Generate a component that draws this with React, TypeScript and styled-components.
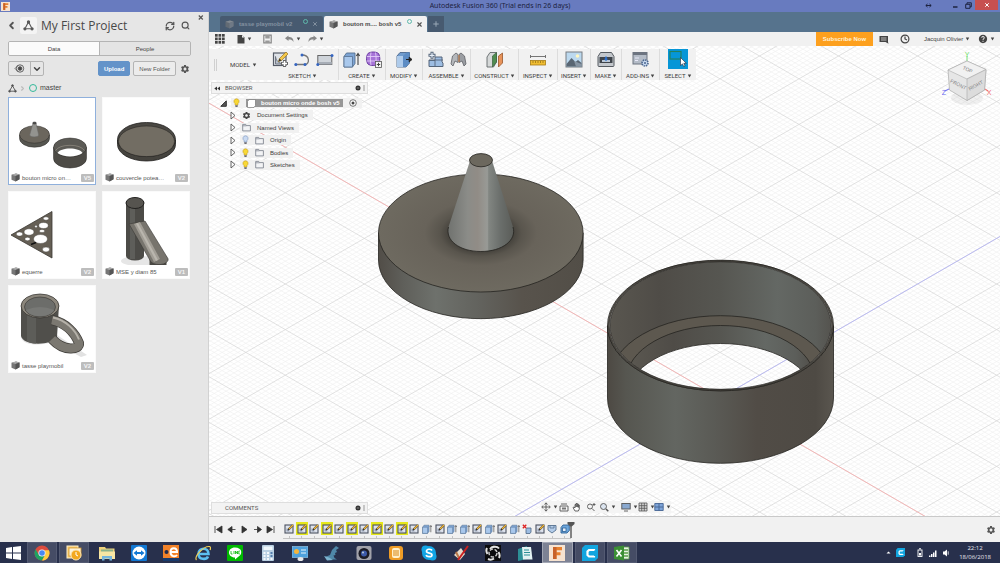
import React from "react";
import styled, { createGlobalStyle } from "styled-components";
import { ChevronDown, ChevronLeft, ChevronRight, RefreshCw, Search, X, Plus } from "lucide-react";
import { MdSettings, MdHelp } from "react-icons/md";

const Global = createGlobalStyle`
  *, *::before, *::after { box-sizing: border-box; }
  html, body { margin: 0; padding: 0; }
  body { font-family: "Liberation Sans", Arial, sans-serif; font-size: 6px; line-height: 8px; color: #444; }
  button { font: inherit; color: inherit; background: none; border: 0; padding: 0; margin: 0; cursor: pointer; }
  svg { display: block; flex: none; }
`;

const Page = styled.div`
  min-height: 100vh;
  display: flex;
  flex-direction: column;
`;

/* ---------- window title bar ---------- */
const TitleBar = styled.header`
  height: 12px;
  background: #687bbf;
  display: grid;
  grid-template-columns: 1fr auto 1fr;
  align-items: center;
`;
const TitleLeft = styled.div`
  padding-left: 1px;
`;
const TitleText = styled.h1`
  margin: 0;
  font: 400 7px/12px "Noto Sans", sans-serif;
  color: #1d2340;
`;
const WindowButtons = styled.div`
  display: flex;
  justify-content: flex-end;
  align-self: start;
  padding-right: 2px;
`;
const WindowButton = styled.button<{ $w?: number; $close?: boolean }>`
  width: ${(p) => p.$w ?? 14}px;
  height: 10px;
  display: flex;
  align-items: center;
  justify-content: center;
  background: ${(p) => (p.$close ? "#c75050" : "transparent")};
`;

const Main = styled.div`
  flex: 1;
  display: flex;
`;

/* ---------- data panel ---------- */
const Panel = styled.aside`
  width: 209px;
  flex: none;
  background: #e6e6e6;
  border-right: 1px solid #d2d2d2;
  display: flex;
  flex-direction: column;
`;
const PanelHeader = styled.div`
  display: flex;
  height: 27px;
  padding: 0 4px 0 7px;
  align-items: center;
`;
const IconButton = styled.button<{ $w?: number }>`
  width: ${(p) => p.$w ?? 8}px;
  height: 10px;
  display: flex;
  align-items: center;
  justify-content: center;
  flex: none;
  color: #555;
`;
const ProjectBadge = styled.span`
  width: 17px;
  height: 17px;
  margin: 0 4px 0 5px;
  background: #f4f4f4;
  border-radius: 2px;
  display: flex;
  align-items: center;
  justify-content: center;
`;
const ProjectName = styled.h2`
  flex: 1;
  margin: 0;
  font: 400 12px/18px "Open Sans", sans-serif;
  color: #484848;
  white-space: nowrap;
`;
const CloseSlot = styled.div`
  align-self: flex-start;
  margin-left: 4px;
`;
const PanelBody = styled.div`
  padding: 2px 17px 0 8px;
  display: flex;
  flex-direction: column;
`;
const Segmented = styled.div`
  display: flex;
  height: 15px;
  border: 1px solid #b4b4b4;
  border-radius: 2px;
  overflow: hidden;
`;
const Segment = styled.button<{ $on?: boolean }>`
  flex: 1;
  background: ${(p) => (p.$on ? "#fbfbfb" : "#e4e4e4")};
  & + & { border-left: 1px solid #b4b4b4; }
`;
const Actions = styled.div`
  display: flex;
  align-items: center;
  gap: 3px;
  margin-top: 5px;
  height: 15px;
`;
const Split = styled.div`
  display: flex;
  height: 15px;
  border: 1px solid #b4b4b4;
  border-radius: 2px;
  margin-right: auto;
`;
const SplitPart = styled.button<{ $w: number }>`
  width: ${(p) => p.$w}px;
  display: flex;
  align-items: center;
  justify-content: center;
  & + & { border-left: 1px solid #b4b4b4; }
`;
const ActionButton = styled.button<{ $primary?: boolean }>`
  height: 15px;
  padding: 0 5px;
  border-radius: 2px;
  border: 1px solid ${(p) => (p.$primary ? "#6393c9" : "#b4b4b4")};
  background: ${(p) => (p.$primary ? "#6393c9" : "#ececec")};
  color: ${(p) => (p.$primary ? "#fff" : "#555")};
  font-weight: ${(p) => (p.$primary ? 700 : 400)};
`;
const Crumbs = styled.nav`
  display: flex;
  align-items: center;
  gap: 2px;
  height: 12px;
  margin: 6px 0 3px;
  font-size: 7px;
  color: #444;
`;
const CrumbRing = styled.span`
  width: 8px;
  height: 8px;
  border: 1px solid #35b99a;
  border-radius: 50%;
  margin: 0 1px;
`;
const Cards = styled.div`
  display: grid;
  grid-template-columns: 88px 88px;
  grid-auto-rows: 88px;
  gap: 6px;
`;
const CardBox = styled.article<{ $on?: boolean }>`
  background: #fff;
  border: 1px solid ${(p) => (p.$on ? "#8fb0dc" : "#fafafa")};
  display: flex;
  flex-direction: column;
`;
const CardThumb = styled.div`
  flex: 1;
  min-height: 0;
  overflow: hidden;
`;
const CardFoot = styled.div`
  height: 13px;
  padding: 0 1px 0 2px;
  display: flex;
  align-items: center;
  gap: 2px;
  color: #555;
  white-space: nowrap;
`;
const CardName = styled.span`
  flex: 1;
`;
const Version = styled.span`
  width: 13px;
  height: 8px;
  background: #bdbdbd;
  color: #f4f4f4;
  font-weight: 700;
  text-align: center;
  border-radius: 1px;
`;

/* ---------- work area ---------- */
const Work = styled.main`
  flex: 1;
  min-width: 0;
  display: flex;
  flex-direction: column;
`;
const Tabs = styled.div`
  height: 20px;
  background: #56738d;
  display: flex;
  align-items: flex-end;
  padding: 4px 0 0 11px;
  gap: 1px;
`;
const Tab = styled.div<{ $on?: boolean }>`
  height: 16px;
  width: 103px;
  display: flex;
  align-items: center;
  padding: 0 4px 0 5px;
  background: ${(p) => (p.$on ? "#f1f1f1" : "#475a70")};
  color: ${(p) => (p.$on ? "#4a4a4a" : "#8391a0")};
  font-weight: 700;
  border-radius: 2px 2px 0 0;
`;
const TabName = styled.button`
  flex: 1;
  display: flex;
  align-items: center;
  gap: 5px;
  white-space: nowrap;
`;
const TabRing = styled.span`
  width: 5px;
  height: 5px;
  border: 1px solid #5fb9ac;
  border-radius: 50%;
  margin: 0 3px 6px 0;
`;
const NewTab = styled.button`
  width: 16px;
  height: 16px;
  background: #475a70;
  color: #9aa8b6;
  display: flex;
  align-items: center;
  justify-content: center;
`;
const MenuBar = styled.div`
  height: 14px;
  background: #f1f1f1;
  display: flex;
  align-items: center;
  padding: 0 7px 0 6px;
  color: #444;
`;
const QuickTools = styled.div`
  display: flex;
  align-items: center;
  margin-right: auto;
`;
const Tool = styled.button<{ $w: number }>`
  width: ${(p) => p.$w}px;
  height: 12px;
  display: flex;
  align-items: center;
  justify-content: flex-start;
  gap: 2px;
  white-space: nowrap;
`;
const Subscribe = styled.button`
  height: 14px;
  width: 57px;
  background: #fda01e;
  color: #fff1d8;
  font-weight: 700;
  margin-right: 6px;
`;
const Viewport = styled.section`
  position: relative;
  flex: 1;
  display: flex;
  flex-direction: column;
  align-items: flex-start;
  min-height: 470px;
  padding-top: 3px;
  background: #fff;
  overflow: hidden;
`;
const Scene = styled.svg`
  position: absolute;
  inset: 0;
  width: 100%;
  height: 100%;
`;
const Ribbon = styled.div`
  position: relative;
  display: flex;
  height: 31px;
  background: #f1f1f1;
`;
const Group = styled.div<{ $w: number }>`
  width: ${(p) => p.$w}px;
  display: flex;
  flex-direction: column;
  justify-content: space-between;
  align-items: center;
  & + & { border-left: 1px solid #dcdcdc; }
`;
const GroupIcons = styled.div<{ $gap?: number }>`
  display: flex;
  gap: ${(p) => p.$gap ?? 6}px;
  height: 20px;
  align-items: center;
`;
const GroupLabel = styled.button`
  display: flex;
  align-items: center;
  gap: 1px;
  font: 400 6px/8px Roboto, sans-serif;
  color: #3c3c3c;
  white-space: nowrap;
`;
const Workspace = styled.div`
  width: 58px;
  display: flex;
  align-items: center;
  gap: 13px;
  padding-left: 5px;
`;
const Grip = styled.span`
  width: 3px;
  height: 12px;
  border: solid #d0d0d0;
  border-width: 0 1px;
`;
const Dock = styled.div`
  position: relative;
  width: 157px;
  height: 12px;
  margin: 2px 0 0 2px;
  padding: 0 2px;
  display: flex;
  align-items: center;
  background: #f3f3f3;
  border: 1px solid #dedede;
  font: 400 6px/8px Roboto, sans-serif;
  color: #555;
`;
const DockTitle = styled.span`
  flex: 1;
  padding-left: 5px;
`;
const DockLead = styled.span`
  width: 6px;
`;
const Tree = styled.ul`
  position: relative;
  list-style: none;
  margin: 4px 0 0;
  padding: 0 0 0 11px;
  height: 72px;
  display: flex;
  flex-direction: column;
  justify-content: space-between;
  align-items: flex-start;
  color: #3c3c3c;
`;
const Row = styled.li<{ $depth: number }>`
  height: 10px;
  display: flex;
  align-items: center;
  gap: 4px;
  padding-left: ${(p) => p.$depth * 10}px;
`;
const RowBody = styled.span`
  height: 10px;
  display: flex;
  align-items: center;
  gap: 6px;
  padding: 0 5px 0 2px;
  background: #f1f1f1;
`;
const RowName = styled.span``;
const Selected = styled.span`
  height: 8px;
  display: flex;
  align-items: center;
  gap: 5px;
  padding-right: 3px;
  background: #979797;
  color: #fff;
  font-weight: 700;
`;
const CubeSlot = styled.div`
  position: absolute;
  top: 0;
  right: 4px;
`;
const BottomRow = styled.div`
  position: relative;
  margin-top: auto;
  width: 100%;
  display: flex;
  align-items: center;
  padding-bottom: 2px;
`;
const NavBar = styled.div`
  margin-left: 173px;
  height: 12px;
  display: flex;
  align-items: center;
  background: #f4f4f4;
`;
const Timeline = styled.footer`
  height: 26px;
  background: #f1f1f1;
  border-top: 1px solid #c9c9c9;
  display: flex;
  align-items: center;
  padding: 0 4px 0 3px;
`;
const Playback = styled.div`
  width: 71px;
  display: flex;
  justify-content: flex-start;
`;
const Steps = styled.div`
  width: 288px;
  height: 17px;
  margin-top: 2px;
  display: grid;
  grid-template-columns: repeat(23, 1fr);
`;
const Step = styled.button<{ $on?: boolean }>`
  display: flex;
  flex-direction: column;
  align-items: center;
  justify-content: space-between;
  background: linear-gradient(#c4c4c4, #c4c4c4) 0 100% / 100% 1px no-repeat;
  span {
    display: flex;
    align-items: center;
    justify-content: center;
    width: 12px;
    height: 13px;
    background: ${(p) => (p.$on ? "#e6e81c" : "transparent")};
  }
  &::after { content: ""; width: 1px; height: 3px; background: #c4c4c4; }
`;
const MarkerSlot = styled.div`
  margin-left: -4px;
  margin-right: auto;
`;

/* ---------- task bar ---------- */
const Taskbar = styled.footer`
  height: 21px;
  background: #28304c;
  display: flex;
  align-items: center;
`;
const Start = styled.button`
  width: 26px;
  display: flex;
  justify-content: center;
`;
const Apps = styled.div`
  width: 612px;
  display: grid;
  grid-template-columns: repeat(19, 1fr);
`;
const AppButton = styled.button<{ $state?: "open" | "active" }>`
  height: 21px;
  margin: 0 1px;
  display: flex;
  align-items: center;
  justify-content: center;
  background: ${(p) => (p.$state === "active" ? "#7d8294" : p.$state === "open" ? "#454c65" : "transparent")};
  border: 1px solid ${(p) => (p.$state === "active" ? "#a3a7b4" : p.$state === "open" ? "#535a72" : "transparent")};
`;
const Tray = styled.div`
  margin-left: auto;
  display: flex;
  align-items: center;
  gap: 5px;
  padding-right: 9px;
  color: #e8e8ee;
`;
const Clock = styled.time`
  font: 400 6px/9px "Open Sans", sans-serif;
  text-align: center;
  margin-left: 4px;
`;

/* ---------- small glyphs ---------- */
const Caret = () => (
  <svg width="5" height="4" viewBox="0 0 5 4"><path d="M.8.6h3.4L2.5 3.4z" fill="#444" /></svg>
);
const Nodes = ({ s = 10 }: { s?: number }) => (
  <svg width={s} height={s} viewBox="0 0 10 10" fill="none" stroke="#555" strokeWidth="1">
    <path d="M4.6 2.6 2.2 7M5.4 2.6 7.8 7M3 8h4" />
    <circle cx="5" cy="1.8" r="1" fill="#555" /><circle cx="1.8" cy="8" r="1" fill="#555" /><circle cx="8.2" cy="8" r="1" fill="#555" />
  </svg>
);
const Cube = ({ s = 9, dim = false }: { s?: number; dim?: boolean }) => (
  <svg width={s} height={s} viewBox="0 0 9 9" opacity={dim ? 0.6 : 1}>
    <path d="M.5 1.8 5 .5l3.5.9v4.8L4.6 8.6.5 6.8z" fill="#777" />
    <path d="M.5 1.8 5 .5l3.5.9-4 1.5z" fill="#aaa" /><path d="M4.5 2.9v5.7L8.5 6.2V1.4z" fill={dim ? "#8a8f96" : "#555"} />
  </svg>
);
const Bulb = ({ off = false }: { off?: boolean }) => (
  <svg width="7" height="10" viewBox="0 0 7 10">
    <path d="M3.5.8a2.6 2.6 0 0 1 1.5 4.7L4.8 7H2.2L2 5.5A2.6 2.6 0 0 1 3.5.8z" fill={off ? "#c9daf2" : "#f8d836"} stroke={off ? "#7b93bd" : "#c39a1c"} strokeWidth=".6" />
    <path d="M2.2 7.2h2.6v1.3l-.7.6H2.9l-.7-.6z" fill="#6e6e78" />
  </svg>
);
const Folder = () => (
  <svg width="9" height="9" viewBox="0 0 9 9"><path d="M.7 7.900V1.400h3l.7 1.200h4v5.300z" fill="#f2f3f5" stroke="#757b86" strokeWidth=".8" /><path d="M.7 2.800h3.700" stroke="#757b86" strokeWidth=".7" /></svg>
);
const Expand = () => (
  <svg width="6" height="9" viewBox="0 0 6 9"><path d="M1 1v7l4-3.500z" fill="#fafafa" stroke="#555" strokeWidth=".9" /></svg>
);
const DockEnd = () => (
  <svg width="10" height="8" viewBox="0 0 10 8"><circle cx="3" cy="4" r="2.500" fill="#333" /><path d="M1.800 4h2.400" stroke="#aaa" strokeWidth=".7" /><path d="M9 1v6" stroke="#999" /></svg>
);

/* ---------- ribbon icons ---------- */
const SketchIcon = () => (
  <svg width="17" height="17" viewBox="0 0 17 17">
    <rect x="1.500" y="2" width="12.500" height="12.500" fill="#dfe3e8" stroke="#555b66" strokeWidth="1.200" />
    <path d="M3.500 13V5.500c.500 4 3 6.800 8 7.500z" fill="#b9c0ca" stroke="#6a717d" strokeWidth=".9" />
    <path d="m6.500 10.500 1-3L14 1l2 2-6.500 6.500z" fill="#f4c84a" stroke="#9a7422" strokeWidth=".7" />
    <path d="m6.500 10.500 1-3 2 2z" fill="#333" />
    <path d="M12.500 9v7M9 12.500h7" stroke="#666" strokeWidth="3" /><path d="M12.500 10v5M10 12.500h5" stroke="#fff" strokeWidth="1.500" />
  </svg>
);
const SketchStep = () => (
  <svg width="10" height="10" viewBox="0 0 10 10">
    <rect x="1" y="1" width="8" height="8" fill="#dfe4ee" stroke="#4a5160" strokeWidth="1.100" />
    <path d="M2.500 7.500v-4c.300 2.400 2 3.800 5 4z" fill="#8f9bb0" />
    <path d="M4 6 8.800 1.200" stroke="#333" strokeWidth="2" /><path d="M5 5 9 1" stroke="#f2b636" strokeWidth="1.500" />
  </svg>
);
const ExtrudeIcon = ({ s = 17 }: { s?: number }) => (
  <svg width={s} height={s} viewBox="0 0 17 17">
    <path d="M1 5.500 3.500 2H12v10.500L9.500 16H1z" fill="#7da4d4" stroke="#55708f" strokeWidth=".9" />
    <path d="M1 5.500h8.500V16H1z" fill="#a9c8ec" stroke="#55708f" strokeWidth=".8" />
    <path d="M15 14V3M13.300 5 15 2.500 16.700 5" fill="none" stroke="#444" strokeWidth="1.100" />
  </svg>
);
const icons: Record<string, React.ReactNode> = {
  sketch: <SketchIcon />,
  arc: (
    <svg width="17" height="17" viewBox="0 0 17 17"><path d="M2 13.500h9M8 4c8 0 8 9 3 9.500" fill="none" stroke="#777" strokeWidth="1.300" /><g fill="#3565c0"><circle cx="1.800" cy="13.500" r="1.500" /><circle cx="11" cy="13.500" r="1.500" /><circle cx="8" cy="4" r="1.500" /></g></svg>
  ),
  rect: (
    <svg width="18" height="17" viewBox="0 0 18 17"><rect x="1.800" y="4.500" width="14" height="9" fill="#cfd4da" stroke="#666" /><path d="M1.800 11h14v2.500h-14z" fill="#a7adb6" /><g fill="#3565c0"><circle cx="16" cy="4.500" r="1.500" /><circle cx="1.800" cy="13.500" r="1.500" /></g></svg>
  ),
  extrude: <ExtrudeIcon />,
  form: (
    <svg width="17" height="17" viewBox="0 0 17 17"><path d="M3 2.500C5.500.5 11 .5 13.500 2.500c1.800 2.500 1.800 8 0 10.500-2.500 2-8 2-10.500 0-2-2.500-2-8 0-10.500z" fill="#a774d8" stroke="#6a3ba0" /><path d="M1.800 5.500h13M1.800 10h13M6 1.500c-.8 4-.8 9 0 12.500M10.500 1.500c.8 4 .8 9 0 12.500" fill="none" stroke="#e3cdf8" strokeWidth=".9" /><rect x="10.500" y="10.500" width="6" height="6" fill="#f4f4f4" stroke="#555" strokeWidth=".8" /><path d="M13.500 11.800v3.400M11.800 13.500h3.400" stroke="#444" /></svg>
  ),
  press: (
    <svg width="17" height="17" viewBox="0 0 17 17"><path d="M1 5 4 1.500h9.500V12L10 16H1z" fill="#6f9bcd" stroke="#4b678a" strokeWidth=".9" /><path d="M1 5h6v11H1z" fill="#aecbeb" /><path d="m7 5 3.500-3.500h3V12L10 16H7z" fill="#5c8cc4" /><path d="M10 8.500h5M13.200 6.200 16 8.500l-2.800 2.300z" fill="#222" stroke="#222" /></svg>
  ),
  component: (
    <svg width="17" height="17" viewBox="0 0 17 17"><path d="M2 9h6V6h7v5l1 1v3.500H2z" fill="#9dbde2" stroke="#55657a" /><path d="M8 15.500V9h8M2 9.500h6" fill="none" stroke="#55657a" strokeWidth=".9" /><path d="M5 .8v7M1.500 4.300h7" stroke="#55657a" strokeWidth="3" /><path d="M5 1.800v5M2.500 4.300h5" stroke="#e6eef8" strokeWidth="1.200" /></svg>
  ),
  joint: (
    <svg width="17" height="17" viewBox="0 0 17 17"><path d="m1 13 1.500-8L6 2l2 1.500v8L5 10l-2 5z" fill="#b4b7bb" stroke="#5d6065" strokeWidth=".8" /><path d="m16 13-1.500-8L11 2 9 3.500v8l3-1.500 2 5z" fill="#9a9da2" stroke="#5d6065" strokeWidth=".8" /><path d="M9 4v7" stroke="#d4752b" strokeWidth=".8" /></svg>
  ),
  construct: (
    <svg width="18" height="17" viewBox="0 0 18 17"><path d="M1 6 4 1.500h6.500V11L7.500 16H1z" fill="#d5d8d8" stroke="#63696b" strokeWidth=".9" /><path d="m6.500 5 4-3.500V11l-4 5z" fill="#4f8d50" stroke="#3b623c" strokeWidth=".7" /><path d="m12.500 5 4-3v10l-4 4z" fill="#e7935a" stroke="#98552a" strokeWidth=".8" /></svg>
  ),
  measure: (
    <svg width="18" height="17" viewBox="0 0 18 17"><path d="M1.500 5.500h15M1.500 4v3M16.500 4v3" stroke="#666" fill="none" strokeWidth=".9" /><rect x="1.500" y="9.500" width="15" height="4.500" fill="#f0bd31" stroke="#a77c14" strokeWidth=".8" /><path d="M4 10v2M6.500 10v2M9 10v2M11.500 10v2M14 10v2" stroke="#7b5a0e" strokeWidth=".6" /></svg>
  ),
  image: (
    <svg width="18" height="17" viewBox="0 0 18 17"><rect x="1" y="1" width="16" height="15" fill="#bcd9ef" stroke="#777c82" /><circle cx="12.500" cy="5" r="1.800" fill="#fff7c0" /><path d="m1.500 13 5-6 4 4 2.500-2 3.500 3v3.500h-15z" fill="#596673" /><path d="m9 10 2 5.500h5.500V13z" fill="#8795a3" /></svg>
  ),
  make: (
    <svg width="18" height="17" viewBox="0 0 18 17"><path d="M3.500 1.500h11l2.500 4v9a1 1 0 0 1-1 1H2a1 1 0 0 1-1-1v-9z" fill="#c3c7cc" stroke="#555a60" /><path d="M2.500 6h13v6h-13z" fill="#3f444b" /><path d="M5 9h8v2H5z" fill="#b9c6d6" /><path d="m9 10.300 2-2.600H9.800V5.500H8.200v2.200H7z" fill="#2f74d4" /></svg>
  ),
  addins: (
    <svg width="18" height="17" viewBox="0 0 18 17"><rect x="1" y="1.500" width="14" height="11.500" fill="#b4bcc7" stroke="#6c7480" /><path d="M1 3h14" stroke="#6c7480" strokeWidth="2" /><path d="M3 7h4M3 9.500h3" stroke="#eef" strokeWidth=".9" /><circle cx="13" cy="12" r="3" fill="#c9daf0" stroke="#4a6690" strokeWidth="1.600" strokeDasharray="1.500 .8" /><circle cx="13" cy="12" r="1" fill="#4a6690" /></svg>
  ),
  select: (
    <svg width="20" height="20" viewBox="0 0 20 20"><rect width="20" height="20" fill="#0696d7" /><rect x="2" y="2.500" width="11" height="7.500" fill="none" stroke="#24805c" strokeWidth="1.100" /><path d="M12.500 8.500v8l2-1.600 1.200 2.600 1.300-.7-1.200-2.500h2.500z" fill="#fff" stroke="#223" strokeWidth=".6" /></svg>
  ),
};

const groups = [
  { label: "SKETCH", w: 71, gap: 5, icons: ["sketch", "arc", "rect"] },
  { label: "CREATE", w: 47, gap: 5, icons: ["extrude", "form"] },
  { label: "MODIFY", w: 37, gap: 5, icons: ["press"] },
  { label: "ASSEMBLE", w: 48, gap: 6, icons: ["component", "joint"] },
  { label: "CONSTRUCT", w: 48, gap: 5, icons: ["construct"] },
  { label: "INSPECT", w: 39, gap: 5, icons: ["measure"] },
  { label: "INSERT", w: 33, gap: 5, icons: ["image"] },
  { label: "MAKE", w: 31, gap: 5, icons: ["make"] },
  { label: "ADD-INS", w: 38, gap: 5, icons: ["addins"] },
  { label: "SELECT", w: 37, gap: 5, icons: ["select"] },
];

/* ---------- 3D scene ---------- */
const ORIGIN = { x: 720, y: 398 };
const SLOPE = 0.577;
const gridPath = (step: number, skip?: number) => {
  let d = "";
  const n = Math.ceil(900 / step);
  for (let i = -n; i <= n; i++) {
    if (skip && i % skip === 0) continue;
    const c = ORIGIN.y + i * step;
    const l = 200 - ORIGIN.x;
    const r = 1010 - ORIGIN.x;
    d += `M200 ${(c + l * SLOPE).toFixed(2)}L1010 ${(c + r * SLOPE).toFixed(2)}`;
    d += `M200 ${(c - l * SLOPE).toFixed(2)}L1010 ${(c - r * SLOPE).toFixed(2)}`;
  }
  return d;
};
const MINOR = gridPath(4.56, 10);
const MAJOR = gridPath(45.6);

const SceneDefs = () => (
  <defs>
    <linearGradient id="wall"><stop offset="0" stopColor="#4d4943" /><stop offset=".08" stopColor="#565650" /><stop offset=".3" stopColor="#636661" /><stop offset=".48" stopColor="#5a5a55" /><stop offset=".66" stopColor="#514c46" /><stop offset=".92" stopColor="#4e4a44" /><stop offset="1" stopColor="#5a564f" /></linearGradient>
    <linearGradient id="side"><stop offset="0" stopColor="#514d47" /><stop offset=".12" stopColor="#5f5f5a" /><stop offset=".28" stopColor="#6e716c" /><stop offset=".5" stopColor="#62625d" /><stop offset=".7" stopColor="#58534c" /><stop offset="1" stopColor="#524e47" /></linearGradient>
    <linearGradient id="inside"><stop offset="0" stopColor="#5b5851" /><stop offset=".25" stopColor="#4f4c47" /><stop offset=".5" stopColor="#565651" /><stop offset=".74" stopColor="#646864" /><stop offset=".9" stopColor="#5c5e5a" /><stop offset="1" stopColor="#504d48" /></linearGradient>
    <linearGradient id="cone"><stop offset="0" stopColor="#70726f" /><stop offset=".3" stopColor="#8b8c88" /><stop offset=".45" stopColor="#918c86" /><stop offset=".6" stopColor="#989a96" /><stop offset=".62" stopColor="#828682" /><stop offset=".8" stopColor="#6a6e6b" /><stop offset="1" stopColor="#5a5c58" /></linearGradient>
    <radialGradient id="disk"><stop offset="0" stopColor="#36332f" /><stop offset=".31" stopColor="#45423c" /><stop offset=".4" stopColor="#59554d" /><stop offset=".55" stopColor="#68635a" /><stop offset="1" stopColor="#6e6a60" /></radialGradient>
  </defs>
);
const Disk = () => (
  <g stroke="#24231f" strokeWidth=".8">
    <path d="M378.500 233v27a102.300 58.700 0 0 0 204.600 0v-27z" fill="url(#side)" />
    <ellipse cx="480.800" cy="233" rx="102.300" ry="59" fill="url(#disk)" />
    <path d="M469.600 162 448.500 227C445 240 459 251.500 480.800 251.500S517 240 513 227L492.400 162z" fill="url(#cone)" stroke="none" />
    <path d="M448.500 227C445 240 459 251.500 480.800 251.500S517 240 513 227" fill="none" />
    <ellipse cx="481" cy="160.200" rx="11.500" ry="6.600" fill="#6c685e" />
  </g>
);
const Ring = () => (
  <g stroke="#24231f" strokeWidth=".8">
    <mask id="hole" maskUnits="userSpaceOnUse" x="600" y="250" width="240" height="220">
      <ellipse cx="720.500" cy="325.500" rx="110.500" ry="63.800" fill="#fff" stroke="none" />
      <ellipse cx="720.500" cy="397.500" rx="94" ry="54" fill="#000" stroke="none" />
    </mask>
    <clipPath id="rim"><ellipse cx="720.500" cy="325.500" rx="110.500" ry="63.800" /></clipPath>
    <g mask="url(#hole)">
      <rect x="600" y="250" width="240" height="220" fill="url(#inside)" stroke="none" />
      <ellipse cx="720.500" cy="379.500" rx="110.500" ry="63.800" fill="#5d584f" />
      <ellipse cx="720.500" cy="379.500" rx="94" ry="54" fill="url(#inside)" />
    </g>
    <g clipPath="url(#rim)"><ellipse cx="720.500" cy="397.500" rx="94" ry="54" fill="none" /></g>
    <path d="M607.500 325.500V398a113 65.300 0 0 0 226 0v-72.500a113 65.300 0 0 1-226 0z" fill="url(#wall)" />
    <ellipse cx="720.500" cy="325.500" rx="111.800" ry="64.600" fill="none" stroke="#4b4842" strokeWidth="2" />
    <ellipse cx="720.500" cy="325.500" rx="110.500" ry="63.800" fill="none" strokeWidth=".7" />
    <ellipse cx="720.500" cy="325.500" rx="113" ry="65.300" fill="none" />
  </g>
);
const ViewCube = () => (
  <svg width="56" height="62" viewBox="940 46 56 62" fontFamily="Liberation Sans, sans-serif">
    <ellipse cx="967" cy="98" rx="16" ry="7" fill="#000" opacity=".06" />
    <path d="M967 61V56" stroke="#7be07b" /><path d="m949 89-4 2" stroke="#7a7af0" strokeWidth="1.200" /><path d="m985 89 3 2" stroke="#f07a7a" strokeWidth="1.200" />
    <path d="m967 61 19 8.500-1.500 20.500L967 100.500 949.500 90 948 70z" fill="#e6e6e6" stroke="#a9a9a9" strokeWidth=".7" />
    <path d="m967 61 19 8.500-19 9.500-19-9z" fill="#f1f1f1" stroke="#a9a9a9" strokeWidth=".6" />
    <path d="M967 79v21.500L984.500 90 986 69.500z" fill="#dcdcdc" stroke="#a9a9a9" strokeWidth=".6" />
    <g fontSize="5" fill="#808080" textAnchor="middle">
      <text transform="translate(967 71) rotate(24)">TOP</text>
      <text transform="translate(957.500 86) rotate(27)">FRONT</text>
      <text transform="translate(976.500 87) rotate(-29)">RIGHT</text>
    </g>
    <g fontSize="7" textAnchor="middle"><text x="967" y="56.500" fill="#6fe06f">Y</text><text x="944" y="95" fill="#6a6af0">Z</text><text x="989" y="95" fill="#f06a6a">X</text></g>
  </svg>
);

/* ---------- thumbnails ---------- */
const thumbs: Record<string, React.ReactNode> = {
  bouton: (
    <g stroke="#2a2926" strokeWidth=".5">
      <path d="M10.500 37v3.500a15 8.700 0 0 0 30 0V37z" fill="#565650" /><ellipse cx="25.500" cy="36.500" rx="15" ry="8.700" fill="#6b665d" />
      <path d="m24 25-3.300 12c0 2.500 9 2.500 9 0L27 25z" fill="#93938f" stroke="#666" /><ellipse cx="25.500" cy="25" rx="1.800" ry="1" fill="#555" />
      <path d="M44.500 49.500v11a16.500 9.500 0 0 0 33 0v-11z" fill="#4d4b46" /><ellipse cx="61" cy="49.500" rx="16.500" ry="9.500" fill="#5b5a55" />
      <path d="M46.500 52.500a15.500 8 0 0 1 29 0" fill="none" stroke="#8b867c" strokeWidth=".8" />
      <path d="M48.500 55c3-6 22-6 25 0-6 4.500-19 4.500-25 0z" fill="#fff" stroke="none" />
    </g>
  ),
  couvercle: (
    <g stroke="#22211f" strokeWidth=".8">
      <path d="M14.500 42v4.500a29 16.500 0 0 0 58 0V42z" fill="#45433e" /><ellipse cx="43.500" cy="41.500" rx="29" ry="17" fill="#4a4843" /><ellipse cx="43.500" cy="43.300" rx="28" ry="15.300" fill="#726d63" strokeWidth=".5" />
    </g>
  ),
  equerre: (
    <g>
      <path d="M2 43 43 19.500V66z" fill="#655f55" stroke="#3a3732" strokeWidth=".8" />
      <g fill="#fff" stroke="#3d3a35" strokeWidth=".4"><ellipse cx="10.500" cy="42" rx="3.200" ry="2.100" /><ellipse cx="20" cy="40" rx="5" ry="3.200" /><ellipse cx="31.500" cy="47" rx="7" ry="4.500" /><ellipse cx="34.500" cy="33.500" rx="4.700" ry="3" /><ellipse cx="37" cy="26.500" rx="2.800" ry="1.700" /><ellipse cx="33" cy="39" rx="2.800" ry="1.500" /><ellipse cx="18.500" cy="47" rx="2.700" ry="1.800" /><ellipse cx="37" cy="57.500" rx="3.500" ry="2.400" /><circle cx="27" cy="34.500" r="1.200" /></g>
      <path d="m22 52.500 5-2" stroke="#111" strokeWidth="1.400" />
    </g>
  ),
  mse: (
    <g>
      <ellipse cx="36" cy="69" rx="18" ry="5" fill="#e6e6e6" />
      <path d="M23 10v54a9 4.500 0 0 0 18 0V10z" fill="#4c4b47" /><path d="M27 12v55h5V12z" fill="#5e5e5a" />
      <ellipse cx="32" cy="11" rx="9" ry="5.500" fill="#56544f" stroke="#22211f" />
      <path d="M46.500 66v7h17v-9z" fill="#4a4843" />
      <path d="M26 32 42 29 64 65a9 5 0 0 1-16 5z" fill="#77746d" stroke="#3b3935" strokeWidth=".6" /><path d="m31 32 6-2 20 37-6 3z" fill="#a19d95" /><path d="m33 31.500 2-.6 20 37-2 1z" fill="#bab6ae" />
    </g>
  ),
  tasse: (
    <g>
      <path d="M12 50c0 10 20 10 32 6l28 15 6-2-30-20z" fill="#e2e2e2" />
      <path d="M12 19v31c2 10 30 10 36 1l2-32z" fill="#504f4b" /><path d="M18 26v29.500c3 1.500 6 2 9 2V28z" fill="#5d5d59" />
      <path d="M43 34c14 3 23 13 27 23 1 7-15 9-27-4" fill="none" stroke="#3f3d39" strokeWidth="10" /><path d="M43 34c14 3 23 13 27 23 1 7-15 9-27-4" fill="none" stroke="#7b7871" strokeWidth="8.500" /><path d="M44 31.500c13 3 22 12 26 22" fill="none" stroke="#b5b1a9" strokeWidth="2" />
      <ellipse cx="31" cy="20" rx="19" ry="12" fill="#8b867c" stroke="#2c2b28" strokeWidth=".7" /><ellipse cx="31" cy="21" rx="15.500" ry="10" fill="#6c6d6a" stroke="#403e3a" strokeWidth=".7" />
      <path d="M17 24q14-6 28 0c-3 8-25 8-28 0z" fill="#787976" />
    </g>
  ),
};
const designs = [
  { name: "bouton micro on…", v: "V5", art: "bouton", on: true },
  { name: "couvercle potea…", v: "V2", art: "couvercle" },
  { name: "equerre", v: "V2", art: "equerre" },
  { name: "MSE y diam 85", v: "V1", art: "mse" },
  { name: "tasse playmobil", v: "V2", art: "tasse" },
];

/* ---------- timeline ---------- */
const steps = "SHSHSHSHSHSESEESESEXSFB".split("");
const stepIcon = (k: string) => {
  if (k === "S" || k === "H") return <SketchStep />;
  if (k === "E") return <ExtrudeIcon s={10} />;
  if (k === "X")
    return <svg width="10" height="10" viewBox="0 0 10 10"><path d="m.8.800 3.500 3.500m0-3.500L.8 4.300" stroke="#d22" strokeWidth="1.300" /><path d="M4 5.500 5 4h4v4L8 9.500H4z" fill="#9dbde2" stroke="#4c6684" strokeWidth=".8" /></svg>;
  if (k === "F")
    return <svg width="10" height="10" viewBox="0 0 10 10"><path d="M1 1.500h8V6L5 9 1 6z" fill="#b4cdea" stroke="#55708f" strokeWidth=".9" /><path d="M3 1.500V4h4V1.500" fill="none" stroke="#55708f" strokeWidth=".8" /></svg>;
  return <svg width="10" height="10" viewBox="0 0 10 10"><path d="M1 3.500 3 1h6.300v5.500L7 9H1z" fill="#6da7dc" stroke="#2f6296" strokeWidth=".9" /><rect x="2.500" y="4" width="3.500" height="3.500" fill="#e4eefa" stroke="#2f6296" strokeWidth=".8" /></svg>;
};
const playPaths: [string, string][] = [
  ["First", "M1 1v7M8 1 2.500 4.500 8 8z"],
  ["Back", "M5 1.500.8 4.500 5 7.500zM5 4.500h3.500"],
  ["Play", "M2 1v7l5-3.500z"],
  ["Forward", "M4.500 1.500 8.500 4.500l-4 3zM4.500 4.500H1"],
  ["Last", "M8 1v7M1 1l5.500 3.500L1 8z"],
];

/* ---------- task bar art ---------- */
const CuraArt = () => (
  <g><path d="M3 0h13v13l-3 3H0V3z" fill="#12a5df" /><path d="M12 5.500V5H7L5.500 6.500v3.500L7 11.500h5V11" fill="none" stroke="#fff" strokeWidth="2.200" /></g>
);
const FusionArt = () => (
  <g><rect width="16" height="16" fill="#f7e3d0" /><path d="M4 2h9v3.200H7.500v2h4v3h-4V14H4z" fill="#e8812f" /><path d="M4 2h3.500v12H4z" fill="#c8622a" /></g>
);
const apps: { name: string; state?: "open" | "active"; art: React.ReactNode }[] = [
  { name: "Chrome", state: "open", art: <><circle cx="8" cy="8" r="7.500" fill="#dd4b3e" /><path d="M1.500 4.300A7.500 7.500 0 0 0 8 15.500l3.200-5.600L4.800 9.800z" fill="#1da462" /><path d="M15 5.200A7.500 7.500 0 0 1 8 15.500l3.200-5.700L11 5.200z" fill="#ffcd40" /><circle cx="8" cy="8" r="3.600" fill="#f4f4f4" /><circle cx="8" cy="8" r="2.800" fill="#4688f4" /></> },
  { name: "Outlook", state: "open", art: <><rect x="1" y="1" width="11" height="12" fill="#f3c566" stroke="#fff0cc" /><rect x="3" y="3" width="12" height="8" fill="#fdf3da" stroke="#d59a2e" strokeWidth=".8" /><circle cx="10" cy="10" r="5" fill="#f3a81e" stroke="#fce6b6" /><path d="M10 7v3l2 1" fill="none" stroke="#fff" /></> },
  { name: "Explorer", art: <><path d="M0 2h6l1 1.500h8.500V14H0z" fill="#efd27c" /><path d="M2 4.500h12V8H2z" fill="#8bb28a" /><path d="M0 6.500h16V14H0z" fill="#f8e6a4" /><path d="M3 15.500V11h10v4.500h-2.500v-2h-5v2z" fill="#76b5dd" /></> },
  { name: "TeamViewer", art: <><rect width="16" height="16" rx="1" fill="#1178d4" /><circle cx="8" cy="8" r="6.500" fill="#fff" /><path d="M2.500 8 6 5.200V7h4V5.200L13.500 8 10 10.800V9H6v1.800z" fill="#1178d4" /></> },
  { name: "eMule", art: <><rect width="16" height="13" fill="#f28229" /><rect y="13" width="16" height="3" fill="#173a6c" /><circle cx="3.500" cy="7" r="2" fill="#222c4c" /><path d="M7.500 7h6.500c0-5-6.500-5-6.500 0s5 5 6.500 3" fill="none" stroke="#fff" strokeWidth="2" /></> },
  { name: "Internet Explorer", art: <><path d="M4 9h9.500c0-7-10-7-10 0 0 6 8 6 9.500 2.500" fill="none" stroke="#5cc0f0" strokeWidth="2.600" /><path d="M1.500 15C-1 12 8 1 14.500 1.500c1.500.5 1 2.500.5 3.500" fill="none" stroke="#f2cf55" strokeWidth="1.200" /></> },
  { name: "Line", art: <><rect width="16" height="16" rx="1" fill="#00b900" /><path d="M8 2.500c7.500 0 8 7 3 9.500L8 14.500v-2c-8 0-8-10 0-10z" fill="#fff" /><path d="M4 6v3h1.500M7 6v3M8.500 9V6l2 3V6M12.800 6h-1v3h1" fill="none" stroke="#00b900" strokeWidth=".8" /></> },
  { name: "Calculator", art: <><rect x="2" width="12" height="16" rx="1" fill="#b9cfe2" /><rect x="3.500" y="1.500" width="9" height="3.500" fill="#f0f7fc" /><path d="M3.500 7h2v2h-2zM7 7h2v2H7zM3.500 10h2v2h-2zM7 10h2v2H7zM3.500 13h2v2h-2zM7 13h2v2H7zM10.500 13h2v2h-2z" fill="#f5f8fb" /><path d="M10.500 7h2v2h-2zM10.500 10h2v2h-2z" fill="#547fae" /></> },
  { name: "Control Panel", art: <><rect x="0" y="1.500" width="16" height="11" fill="#4fa1dd" stroke="#9fd0f2" strokeWidth=".6" /><circle cx="4.500" cy="6.500" r="2.500" fill="#f6b53c" /><path d="M9 5h5M9 8h5" stroke="#e5f3fc" strokeWidth="1.200" /><ellipse cx="8.500" cy="14" rx="3" ry="2" fill="#e8e8ea" /></> },
  { name: "Seahorse", art: <><path d="m1 12 5-2 2-5 4-4 3 2-3 2 1 2-2 1 .5 2-2 .5 1 2.500 2.500 1.500H3z" fill="#4f87a8" /><path d="m0 11 5 1.500L9 15l-6 .500z" fill="#7db3cf" /></> },
  { name: "Camera", art: <><rect x=".5" y="1" width="15" height="14" rx="2" fill="#a2a2aa" /><circle cx="8" cy="8.500" r="5.500" fill="#1c1c26" /><circle cx="8" cy="8.500" r="3" fill="#3c59a8" /><circle cx="7" cy="7.500" r="1" fill="#bcd" /></> },
  { name: "Notes", art: <><rect x="1" y="1" width="14" height="14" rx="3" fill="#ef9c26" /><rect x="4" y="3" width="8" height="10" rx="2" fill="#fff0cb" /><path d="M5 6h6M5 8h6M5 10h6" stroke="#d98715" /></> },
  { name: "Skype", art: <><circle cx="8" cy="8" r="7" fill="#12a5e6" /><circle cx="4.500" cy="4.500" r="4" fill="#12a5e6" /><circle cx="11.500" cy="11.500" r="4" fill="#12a5e6" /><path d="M11 5.500C10 3.500 5.500 4 5.500 6.200c0 2.500 5.500 1.300 5.500 3.700 0 2.200-5 2.500-6 .3" fill="none" stroke="#fff" strokeWidth="1.700" /></> },
  { name: "Paint", art: <><path d="M1 10 8 3l4 6-5 6z" fill="#e8dccb" /><path d="m3 7 3 6" stroke="#b67648" strokeWidth="2" /><path d="M15 1 5 15" stroke="#c92020" strokeWidth="2" /></> },
  { name: "Shutter", art: <><rect width="16" height="16" fill="#0b0b0d" /><g stroke="#e4e4e4" strokeWidth="2" fill="none"><path d="M8 2q4-1 6 1.500M13.500 7q2 3 .5 6M9 13.500q-3 2-6 .500M2.500 9q-2-3-.500-6M5 4q2-3 5-2" /></g><circle cx="8" cy="8" r="4" fill="none" stroke="#c9c9c9" strokeWidth="1.500" strokeDasharray="3.500 1.500" /></> },
  { name: "Publisher", art: <><path d="m1 4 9-3v13l-9 2z" fill="#2d8f96" /><path d="M5 2h9l1.500 12.500H6z" fill="#e4f2f2" /><path d="M7 5h5M7 7.500h6M7 10h6" stroke="#2d8f96" strokeWidth="1.200" /></> },
  { name: "Fusion 360", state: "active", art: <FusionArt /> },
  { name: "Cura", state: "open", art: <CuraArt /> },
  { name: "Excel", state: "open", art: <><path d="M4 2h11v12H4z" fill="#e8f3e4" stroke="#58a048" strokeWidth=".8" /><path d="M10 5h4M10 8h4M10 11h4" stroke="#58a048" strokeWidth="1.500" /><path d="m0 2 10-1.500v15L0 14z" fill="#3b8f35" /><path d="m2.500 5 5 6.500M7.500 5l-5 6.500" stroke="#fff" strokeWidth="1.600" /></> },
];

const tree = [
  { name: "Document Settings", icon: "gear" },
  { name: "Named Views", icon: "folder" },
  { name: "Origin", icon: "folder", bulb: "off" },
  { name: "Bodies", icon: "folder", bulb: "on" },
  { name: "Sketches", icon: "folder", bulb: "on" },
];

const navTools: { name: string; w: number; caret?: boolean; art: React.ReactNode }[] = [
  { name: "Orbit", w: 18, caret: true, art: <path d="M5 1v8M1 5h8M3.500 2.500 5 .8l1.500 1.700M3.500 7.500 5 9.200l1.500-1.700M8 3.500 9.200 5 8 6.500M2 3.500.8 5 2 6.500" /> },
  { name: "Look at", w: 13, art: <><path d="M1 4h8v5H1zM2 2h6" /><rect x="3" y="5.500" width="4" height="2" fill="#777" stroke="none" /></> },
  { name: "Pan", w: 14, art: <path d="M3 9 1 5.500l1-.5 1 1V2.500h1V5 1.500h1.200V5 2h1.100v3.500V3h1V7l-1 2z" fill="#fff" /> },
  { name: "Zoom", w: 13, art: <><circle cx="4" cy="4.500" r="2.500" /><path d="m6 6.500 2.500 2.500M8 1v3M6.500 2.500h3" /></> },
  { name: "Fit", w: 22, caret: true, art: <><circle cx="4.500" cy="4.500" r="3" fill="#dbe4ef" /><path d="m7 7 2.300 2.300" strokeWidth="1.500" /></> },
  { name: "Display", w: 17, caret: true, art: <><rect x=".8" y="1.500" width="8.400" height="5.500" fill="#8aa9d0" /><path d="M3 9h4" /></> },
  { name: "Grid", w: 16, caret: true, art: <path d="M1 1h8v8H1zM1 3.700h8M1 6.300h8M3.700 1v8M6.300 1v8" fill="#d5d5d5" strokeWidth=".8" /> },
  { name: "Viewports", w: 17, caret: true, art: <path d="M.8 1.500h8.400v7H.8zM5 1.500v7M.8 5h8.400" fill="#7ea4d8" stroke="#456493" /> },
];

export default function App() {
  return (
    <Page>
      <Global />
      <TitleBar>
        <TitleLeft><svg width="9" height="9" viewBox="0 0 16 16"><FusionArt /></svg></TitleLeft>
        <TitleText>Autodesk Fusion 360 (Trial ends in 26 days)</TitleText>
        <WindowButtons>
          <WindowButton $w={40} aria-label="Resize"><svg width="7" height="5" viewBox="0 0 7 5"><path d="M1 2.500h5M2.500 1 .8 2.500 2.500 4M4.500 1l1.700 1.500L4.500 4" fill="none" stroke="#1d2340" /></svg></WindowButton>
          <WindowButton $w={14} aria-label="Minimise"><svg width="6" height="6"><path d="M1 5h4.500" stroke="#1d2340" strokeWidth="1.500" /></svg></WindowButton>
          <WindowButton $w={13} aria-label="Restore"><svg width="7" height="7" viewBox="0 0 7 7"><path d="M2 2V.800h4.300v4H5M.7 2.300H5v4H.7z" fill="none" stroke="#1d2340" /></svg></WindowButton>
          <WindowButton $w={23} $close aria-label="Close"><X size={6} color="#fff" strokeWidth={4} /></WindowButton>
        </WindowButtons>
      </TitleBar>

      <Main>
        <Panel>
          <PanelHeader>
            <IconButton aria-label="Back"><ChevronLeft size={11} strokeWidth={4} /></IconButton>
            <ProjectBadge><Nodes s={11} /></ProjectBadge>
            <ProjectName>My First Project</ProjectName>
            <IconButton $w={12} aria-label="Refresh"><RefreshCw size={10} strokeWidth={3} /></IconButton>
            <IconButton $w={18} aria-label="Search"><Search size={9} strokeWidth={3} /></IconButton>
            <CloseSlot><IconButton $w={6} aria-label="Close panel"><svg width="6" height="5" viewBox="0 0 6 5"><path d="m.8.500 4 4M4.800.500l-4 4" stroke="#555" strokeWidth="1.200" /></svg></IconButton></CloseSlot>
          </PanelHeader>
          <PanelBody>
            <Segmented><Segment $on>Data</Segment><Segment>People</Segment></Segmented>
            <Actions>
              <Split>
                <SplitPart $w={21} aria-label="View"><svg width="11" height="9" viewBox="0 0 11 9" fill="none" stroke="#555"><path d="M1 4.500 4 1.500M1 4.500l3 3" strokeWidth=".8" /><circle cx="6" cy="4.500" r="3.700" strokeWidth=".9" /><circle cx="6" cy="4.500" r="1.800" fill="#444" /></svg></SplitPart>
                <SplitPart $w={13} aria-label="View options"><ChevronDown size={10} strokeWidth={3.5} /></SplitPart>
              </Split>
              <ActionButton $primary>Upload</ActionButton>
              <ActionButton>New Folder</ActionButton>
              <IconButton $w={12} aria-label="Settings"><MdSettings size={10} /></IconButton>
            </Actions>
            <Crumbs>
              <Nodes s={9} />
              <ChevronRight size={7} strokeWidth={4} color="#bbb" />
              <CrumbRing />
              <span>master</span>
            </Crumbs>
            <Cards>
              {designs.map((d) => (
                <CardBox key={d.name} $on={d.on}>
                  <CardThumb><svg width="86" height="76" viewBox="0 0 86 76">{thumbs[d.art]}</svg></CardThumb>
                  <CardFoot><Cube /><CardName>{d.name}</CardName><Version>{d.v}</Version></CardFoot>
                </CardBox>
              ))}
            </Cards>
          </PanelBody>
        </Panel>

        <Work>
          <Tabs>
            <Tab>
              <TabName><Cube dim /><span>tasse playmobil v2</span></TabName>
              <TabRing /><IconButton aria-label="Close tab"><X size={6} strokeWidth={4} color="#8391a0" /></IconButton>
            </Tab>
            <Tab $on>
              <TabName><Cube /><span>bouton m.... bosh v5</span></TabName>
              <TabRing /><IconButton aria-label="Close tab"><X size={7} strokeWidth={4} /></IconButton>
            </Tab>
            <NewTab aria-label="New tab"><Plus size={8} strokeWidth={3} /></NewTab>
          </Tabs>
          <MenuBar>
            <QuickTools>
              <Tool $w={22} aria-label="Data panel"><svg width="10" height="10" viewBox="0 0 10 10" fill="#444">{[0, 1, 2].flatMap((r) => [0, 1, 2].map((c) => <rect key={`${r}${c}`} x={c * 3.5} y={r * 3.5} width="2.700" height="2.700" />))}</svg></Tool>
              <Tool $w={26} aria-label="File"><svg width="8" height="10" viewBox="0 0 8 10"><path d="M.5 1H5l2.500 2.500V9.500h-7z" fill="#444" /><path d="M5 1v2.500h2.500" fill="#f1f1f1" /></svg><Caret /></Tool>
              <Tool $w={22} aria-label="Save"><svg width="9" height="10" viewBox="0 0 9 10"><path d="M.8 1.200h7.400v7.600H.8z" fill="none" stroke="#888" strokeWidth="1.200" /><path d="M2.300 1.500h4.400v3H2.300zM2.300 6.500h4.400v2.500H2.300z" fill="#999" /></svg></Tool>
              <Tool $w={23} aria-label="Undo"><svg width="9" height="8" viewBox="0 0 9 8"><path d="M0 3.200 3.500.5V2c3 0 5 1 5 5-1-2-2.500-2.500-5-2.500V6z" fill="#888" /></svg><Caret /></Tool>
              <Tool $w={20} aria-label="Redo"><svg width="9" height="8" viewBox="0 0 9 8"><path d="M9 3.200 5.500.5V2c-3 0-5 1-5 5 1-2 2.500-2.500 5-2.500V6z" fill="#888" /></svg><Caret /></Tool>
            </QuickTools>
            <Subscribe>Subscribe Now</Subscribe>
            <Tool $w={21} aria-label="Comments"><svg width="10" height="9" viewBox="0 0 10 9"><path d="M.5 1h8.500v6l.5 1.800L6.500 7h-6z" fill="#444" /><path d="M2 3h5.500M2 5h5.500" stroke="#ddd" strokeWidth=".8" /></svg></Tool>
            <Tool $w={24} aria-label="Job status"><svg width="10" height="10" viewBox="0 0 10 10" fill="none" stroke="#444" strokeWidth="1.200"><circle cx="5" cy="5" r="3.900" /><path d="M5 2.500V5l2 1" /></svg></Tool>
            <Tool $w={54}>Jacquin Olivier<Caret /></Tool>
            <Tool $w={15} aria-label="Help"><MdHelp size={10} color="#444" /><Caret /></Tool>
          </MenuBar>

          <Viewport>
            <Scene viewBox="209 46 791 470" preserveAspectRatio="xMidYMid slice" aria-label="3D view">
              <SceneDefs />
              <path d={MINOR} stroke="#f1f1f1" strokeWidth=".7" />
              <path d={MAJOR} stroke="#d9d9d9" strokeWidth=".8" />
              <path d="M200 98L1010 565.300" stroke="#f7abab" strokeWidth=".8" />
              <path d="M200 698L1010 230.700" stroke="#b0b0f5" strokeWidth=".8" />
              <Disk />
              <Ring />
            </Scene>
            <Ribbon>
              <Workspace><Grip /><GroupLabel>MODEL&nbsp;<Caret /></GroupLabel></Workspace>
              {groups.map((g) => (
                <Group key={g.label} $w={g.w}>
                  <GroupIcons $gap={g.gap}>{g.icons.map((i) => <React.Fragment key={i}>{icons[i]}</React.Fragment>)}</GroupIcons>
                  <GroupLabel>{g.label}<Caret /></GroupLabel>
                </Group>
              ))}
            </Ribbon>
            <Dock>
              <DockLead><svg width="6" height="5" viewBox="0 0 6 5"><path d="M3 .500v4L.300 2.500zM6 .500v4L3.300 2.500z" fill="#333" /></svg></DockLead>
              <DockTitle>BROWSER</DockTitle><DockEnd />
            </Dock>
            <Tree>
              <Row $depth={0}>
                <svg width="7" height="7" viewBox="0 0 7 7"><path d="M6.300.800v5.500H.800z" fill="#555" stroke="#333" /></svg>
                <RowBody>
                  <Bulb />
                  <Selected>
                    <svg width="10" height="9" viewBox="0 0 10 9"><path d="m1.500 2.500 1.500-2h6.500v6l-1.500 2h-6.500z" fill="#fff" stroke="#777" strokeWidth=".7" /></svg>
                    bouton micro onde bosh v5
                  </Selected>
                  <svg width="8" height="8" viewBox="0 0 8 8"><circle cx="4" cy="4" r="3.300" fill="#fff" stroke="#555" strokeWidth=".8" /><circle cx="4" cy="4" r="1.500" fill="#444" /></svg>
                </RowBody>
              </Row>
              {tree.map((t) => (
                <Row key={t.name} $depth={1}>
                  <Expand />
                  <RowBody>
                    {t.bulb && <Bulb off={t.bulb === "off"} />}
                    {t.icon === "gear" ? <MdSettings size={9} color="#444" /> : <Folder />}
                    <RowName>{t.name}</RowName>
                  </RowBody>
                </Row>
              ))}
            </Tree>
            <CubeSlot><ViewCube /></CubeSlot>
            <BottomRow>
              <Dock><DockLead /><DockTitle>COMMENTS</DockTitle><DockEnd /></Dock>
              <NavBar>
                {navTools.map((n) => (
                  <Tool key={n.name} $w={n.w} aria-label={n.name}>
                    <svg width="10" height="10" viewBox="0 0 10 10" fill="none" stroke="#555" strokeWidth=".9">{n.art}</svg>
                    {n.caret && <Caret />}
                  </Tool>
                ))}
              </NavBar>
            </BottomRow>
          </Viewport>

          <Timeline>
            <Playback>
              {playPaths.map(([n, d]) => (
                <IconButton key={n} $w={13} aria-label={n}><svg width="9" height="9" viewBox="0 0 9 9"><path d={d} fill="#333" stroke="#333" strokeWidth=".8" /></svg></IconButton>
              ))}
            </Playback>
            <Steps>{steps.map((k, i) => <Step key={i} $on={k === "H"} aria-label={`Feature ${i + 1}`}><span>{stepIcon(k)}</span></Step>)}</Steps>
            <MarkerSlot><svg width="8" height="18" viewBox="0 0 8 18"><path d="M.5 1h7v2L4.700 5.500V17H3.300V5.500L.5 3z" fill="#555" /></svg></MarkerSlot>
            <IconButton $w={10} aria-label="Timeline settings"><MdSettings size={10} /></IconButton>
          </Timeline>
        </Work>
      </Main>

      <Taskbar>
        <Start aria-label="Start"><svg width="15" height="14" viewBox="0 0 15 14" fill="#fff"><path d="M0 2l6-.9v5.400H0zM7 1l8-1v6.500H7zM0 7.500h6v5.400L0 12zM7 7.500h8V14l-8-1z" /></svg></Start>
        <Apps>
          {apps.map((a) => (
            <AppButton key={a.name} $state={a.state} aria-label={a.name}><svg width="16" height="16" viewBox="0 0 16 16">{a.art}</svg></AppButton>
          ))}
        </Apps>
        <Tray>
          <svg width="5" height="3" viewBox="0 0 5 3"><path d="M.5 2.500 2.500.500l2 2z" fill="#fff" /></svg>
          <svg width="9" height="9" viewBox="0 0 16 16"><CuraArt /></svg>
          <svg width="14" height="9" viewBox="0 0 14 9"><rect x="8" y="2" width="4" height="6.500" fill="none" stroke="#fff" strokeWidth=".9" /><path d="M9 .800h2" stroke="#fff" /><path d="M9 5h2v2.500H9z" fill="#fff" /></svg>
          <svg width="9" height="8" viewBox="0 0 9 8" fill="#fff"><path d="M0 6.500h1.500V8H0zM2 5h1.500v3H2zM4 3.500h1.500V8H4zM6 1.500h1.500V8H6z" /></svg>
          <svg width="7" height="8" viewBox="0 0 7 8" fill="#fff"><path d="M0 2.500h1.500L4 .500v7l-2.500-2H0z" /><path d="M5.200 2.300v3.400" stroke="#fff" strokeWidth=".8" /></svg>
          <Clock>22:12<br />18/06/2018</Clock>
        </Tray>
      </Taskbar>
    </Page>
  );
}
